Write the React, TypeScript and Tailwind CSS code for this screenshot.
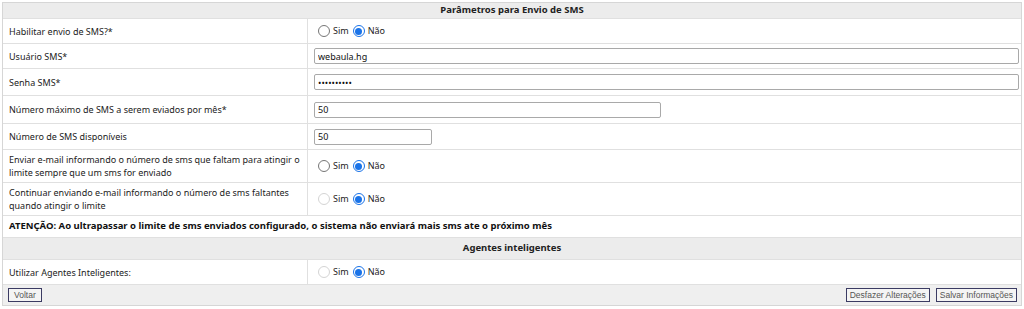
import React from "react";

const font = { fontFamily: "'Noto Sans', 'DejaVu Sans', sans-serif" };

function Radio({ checked, disabled }: { checked?: boolean; disabled?: boolean }) {
  if (checked) {
    return (
      <span className="w-[12px] h-[12px] rounded-full border border-[#1a73e8] bg-white flex items-center justify-center">
        <span className="block w-[7px] h-[7px] rounded-full bg-[#1a73e8]" />
      </span>
    );
  }
  return (
    <span
      className={
        "inline-block w-[12px] h-[12px] rounded-full border bg-white " +
        (disabled ? "border-[#d4d4d4]" : "border-[#767676]")
      }
    />
  );
}

function RadioPair({ disabledSim }: { disabledSim?: boolean }) {
  return (
    <div className="flex items-center text-[9px] text-[#222] ml-[4px]">
      <Radio disabled={disabledSim} />
      <span className="ml-[3px]">Sim</span>
      <span className="ml-[4px]"><Radio checked /></span>
      <span className="ml-[3px]">Não</span>
    </div>
  );
}

function Row({ label, children, h }: { label: React.ReactNode; children: React.ReactNode; h: string }) {
  return (
    <div className={"flex border-b border-[#e0e0e0] " + h}>
      <div className="w-[305px] shrink-0 border-r border-[#e0e0e0] flex items-center pl-[6px] pr-[4px] text-[9px] leading-[13px] text-[#222]">
        {label}
      </div>
      <div className="flex-1 flex items-center pl-[6px] pr-[4px]">{children}</div>
    </div>
  );
}

function Input({ value, w, type }: { value: string; w: string; type?: string }) {
  return (
    <input
      readOnly
      type={type || "text"}
      value={value}
      className={
        "h-[16px] border border-[#a9a9a9] rounded-[2px] px-[3px] text-[9px] text-[#111] bg-white outline-none " + w
      }
      style={font}
    />
  );
}

function Btn({ children, wide }: { children: React.ReactNode; wide?: boolean }) {
  return (
    <button
      className={
        "h-[14px] border border-[#3b3b63] bg-[#f4f4f4] text-[8.5px] leading-[12px] text-[#555] " +
        (wide ? "px-[5px]" : "px-[3px]")
      }
      style={{ fontFamily: "'Liberation Sans', Arial, sans-serif" }}
    >
      {children}
    </button>
  );
}

export default function App() {
  return (
    <div className="w-[1024px] h-[309px] bg-white pt-[2px] pl-[2px] pr-[2px]" style={font}>
      <div className="border-l border-r border-t border-[#d6d6d6]">
        <div className="h-[16px] bg-[#ececec] border-b border-[#e0e0e0] flex items-center justify-center text-[9.5px] font-bold text-[#222]">
          Parâmetros para Envio de SMS
        </div>
        <Row label="Habilitar envio de SMS?*" h="h-[25px]">
          <RadioPair />
        </Row>
        <Row label="Usuário SMS*" h="h-[25px]">
          <Input value="webaula.hg" w="w-[705px]" />
        </Row>
        <Row label="Senha SMS*" h="h-[27px]">
          <Input value="webaula.hg" type="password" w="w-[705px]" />
        </Row>
        <Row label="Número máximo de SMS a serem eviados por mês*" h="h-[28px]">
          <Input value="50" w="w-[347px]" />
        </Row>
        <Row label="Número de SMS disponíveis" h="h-[26px]">
          <Input value="50" w="w-[118px]" />
        </Row>
        <Row
          label="Enviar e-mail informando o número de sms que faltam para atingir o limite sempre que um sms for enviado"
          h="h-[33px]"
        >
          <RadioPair />
        </Row>
        <Row
          label="Continuar enviando e-mail informando o número de sms faltantes quando atingir o limite"
          h="h-[33px]"
        >
          <RadioPair disabledSim />
        </Row>
        <div className="h-[22px] border-b border-[#e0e0e0] flex items-center pl-[6px] text-[9.5px] font-bold text-[#111]">
          ATENÇÃO: Ao ultrapassar o limite de sms enviados configurado, o sistema não enviará mais sms ate o próximo mês
        </div>
        <div className="h-[22px] bg-[#ececec] border-b border-[#e0e0e0] flex items-center justify-center text-[9.5px] font-bold text-[#222]">
          Agentes inteligentes
        </div>
        <Row label="Utilizar Agentes Inteligentes:" h="h-[25px]">
          <RadioPair disabledSim />
        </Row>
        <div className="h-[21px] bg-[#efefef] border-b border-[#d6d6d6] flex items-center justify-between pl-[5px] pr-[4px]">
          <Btn wide>Voltar</Btn>
          <div className="flex gap-[6px]">
            <Btn>Desfazer Alterações</Btn>
            <Btn>Salvar Informações</Btn>
          </div>
        </div>
      </div>
    </div>
  );
}
